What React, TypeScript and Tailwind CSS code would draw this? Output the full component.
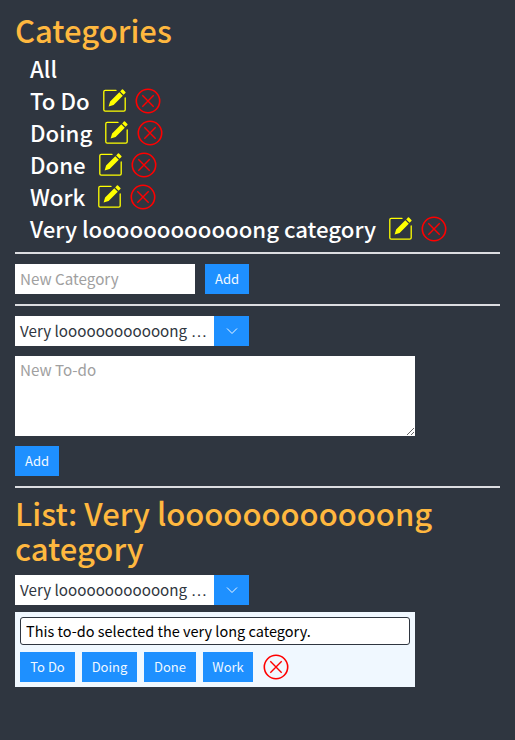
import React from 'react';

const LONG = `Very l${'o'.repeat(12)}ng`;
const categories = ['To Do', 'Doing', 'Done', 'Work', `${LONG} category`];

const EditIcon: React.FC = () => (
  <svg viewBox="0 0 24 24" className="h-6 w-6 text-[#ffff00]" fill="none">
    <path d="M13 2.4H2.2A1.4 1.4 0 0 0 .8 3.8v18a1.4 1.4 0 0 0 1.4 1.4h18.6a1.4 1.4 0 0 0 1.4-1.4V10" stroke="currentColor" strokeWidth="1.3" strokeLinecap="round" />
    <path d="M5.6 18.4l1.5-4.9 9.2-9.2 3.5 3.5-9.2 9.2zM17.2 3.4l1.7-1.8a.8.8 0 0 1 1.1 0l2.4 2.4a.8.8 0 0 1 0 1.1l-1.8 1.7z" fill="currentColor" />
  </svg>
);

const DeleteIcon: React.FC = () => (
  <svg viewBox="0 0 26 26" className="h-[26px] w-[26px] text-[#ff0000]" fill="none" stroke="currentColor">
    <circle cx="13" cy="13" r="11.7" strokeWidth="1.6" />
    <path d="M7.3 7.3l11.4 11.4M18.7 7.3l-11.4 11.4" strokeWidth="1.4" />
  </svg>
);

const BlueButton: React.FC<{ label: string; className?: string }> = ({ label, className = 'px-[10px]' }) => (
  <button className={`h-[30px] bg-[#1e90ff] text-[13px] leading-[20px] text-[#f0f8ff] ${className}`}>{label}</button>
);

const CategorySelect: React.FC = () => (
  <div className="flex h-[30px] w-[234px] bg-white">
    <span className="flex-1 whitespace-nowrap pl-[5px] text-[15.2px] leading-[29px] text-[#2f3640]">
      {LONG} <span className="font-['Liberation_Sans',sans-serif] text-[17px]">…</span>
    </span>
    <span className="flex w-[35px] items-center justify-center bg-[#1e90ff]">
      <svg viewBox="0 0 12 8" className="h-2 w-3" fill="none" stroke="#f0f8ff" strokeWidth="1">
        <path d="M1 1.5l5 5 5-5" />
      </svg>
    </span>
  </div>
);

const App: React.FC = () => {
  return (
    <div className="h-[740px] bg-[#2f3640] px-[15px] pt-[12px] font-['Noto_Sans_CJK_SC',sans-serif]">
      <h1 className="text-[31px] leading-[36px] font-medium text-[#ffb83f]">Categories</h1>
      <ul className="mt-[4px] pl-[15px] text-[22.2px] leading-[32px] font-medium text-white">
        <li>All</li>
        {categories.map((name) => (
          <li key={name} className="flex items-center">
            <span>{name}</span>
            <span className="ml-[13px] flex"><EditIcon /></span>
            <span className="ml-[8px] mt-[1px] flex"><DeleteIcon /></span>
          </li>
        ))}
      </ul>

      <hr className="mt-[8px] w-[485px] border-t-2 border-[#dcdde1]" />
      <div className="mt-[10px] flex gap-[10px]">
        <input placeholder="New Category" className="h-[30px] w-[180px] bg-white px-[5px] pb-[2px] text-[15.2px] text-[#2f3640] outline-none placeholder:text-[#a0a0a0]" />
        <BlueButton label="Add" />
      </div>
      <hr className="mt-[10px] w-[485px] border-t-2 border-[#dcdde1]" />

      <div className="mt-[10px]"><CategorySelect /></div>
      <textarea placeholder="New To-do" className="mt-[10px] block h-[80px] w-[400px] bg-white px-[5px] py-[2px] text-[15.2px] text-[#2f3640] outline-none placeholder:text-[#a0a0a0]" />
      <div className="mt-[10px]"><BlueButton label="Add" /></div>
      <hr className="mt-[10px] w-[485px] border-t-2 border-[#dcdde1]" />

      <h1 className="mt-[7px] w-[485px] text-[31px] leading-[35px] font-medium text-[#ffb83f]">List: {LONG} category</h1>
      <div className="mt-[10px]"><CategorySelect /></div>

      <div className="mt-[7px] w-[400px] bg-[#f0f8ff] p-[5px]">
        <input readOnly value="This to-do selected the very long category." className="block h-[28px] w-[390px] rounded-[3px] border border-[#2f3640] bg-white px-[5px] pb-[2px] text-[14.5px] text-black outline-none" />
        <div className="mt-[7px] flex items-center gap-[7px]">
          <BlueButton label="To Do" className="w-[55px]" />
          <BlueButton label="Doing" className="w-[55px]" />
          <BlueButton label="Done" className="w-[52px]" />
          <BlueButton label="Work" className="w-[50px]" />
          <span className="ml-[3px] flex"><DeleteIcon /></span>
        </div>
      </div>
    </div>
  );
};

export default App;
